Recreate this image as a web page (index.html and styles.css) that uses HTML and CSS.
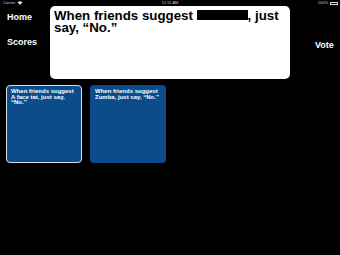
FILE: index.html
```html
<!DOCTYPE html>
<html>
<head>
<meta charset="utf-8">
<link rel="stylesheet" href="styles.css">
</head>
<body>
<div class="screen">
  <div class="status">
    <div class="status-left">Carrier
      <svg class="wifi" width="6" height="4" viewBox="0 0 12 8"><path d="M6 8 L1 2.5 A8 8 0 0 1 11 2.5 Z" fill="#ddd"/></svg>
    </div>
    <div class="status-time">12:15 AM</div>
    <div class="status-right">100%
      <span class="battery"><span class="battery-fill"></span></span>
    </div>
  </div>
  <div class="top">
    <nav class="nav">
      <div class="nav-item home">Home</div>
      <div class="nav-item scores">Scores</div>
    </nav>
    <div class="prompt">When friends suggest <span class="blank"></span>, just say, “No.”</div>
    <div class="side">
      <div class="nav-item vote">Vote</div>
    </div>
  </div>
  <div class="answers">
    <div class="answer selected">When friends suggest A face tat, just say, “No.”</div>
    <div class="answer">When friends suggest Zumba, just say, “No.”</div>
  </div>
</div>
</body>
</html>
```
FILE: styles.css
```css
html, body {
  margin: 0;
  padding: 0;
  background: #000;
}
.screen {
  width: 340px;
  height: 255px;
  background: #000;
  font-family: "Liberation Sans", Arial, sans-serif;
  color: #fff;
  overflow: hidden;
}
.status {
  height: 6px;
  display: flex;
  align-items: center;
  justify-content: space-between;
  padding: 0 2px 0 3px;
  font-size: 4px;
  line-height: 6px;
  color: #ccc;
  position: relative;
}
.status-left, .status-right {
  display: flex;
  align-items: center;
  gap: 2px;
}
.status-time {
  position: absolute;
  left: 0;
  right: 0;
  text-align: center;
}
.battery {
  display: inline-block;
  width: 8px;
  height: 3px;
  border: 0.5px solid #ddd;
  box-sizing: border-box;
  padding: 0.5px;
}
.battery-fill {
  display: block;
  height: 100%;
  background: #ddd;
}
.top {
  display: flex;
  height: 73px;
}
.nav {
  width: 50px;
  box-sizing: border-box;
  padding-left: 7px;
  padding-top: 5.5px;
}
.nav-item {
  font-size: 9px;
  font-weight: bold;
  line-height: 11px;
}
.scores {
  margin-top: 14px;
}
.prompt {
  width: 240px;
  box-sizing: border-box;
  background: #fff;
  color: #000;
  border-radius: 5px;
  padding: 4px 4px;
  font-size: 13.3px;
  font-weight: bold;
  line-height: 11.5px;
}
.blank {
  display: inline-block;
  width: 51px;
  height: 10px;
  background: #000;
}
.side {
  flex: 1;
  padding-top: 33.5px;
  padding-left: 25px;
}
.answers {
  display: flex;
  gap: 8px;
  padding: 6px 0 0 6px;
}
.answer {
  width: 76px;
  height: 78px;
  box-sizing: border-box;
  background: #0d4c8a;
  border-radius: 4px;
  padding: 4px 5px;
  font-size: 6px;
  font-weight: bold;
  line-height: 5.5px;
  color: #fff;
}
.answer.selected {
  border: 1px solid #d6dce8;
  padding: 3px 4px;
}
```
